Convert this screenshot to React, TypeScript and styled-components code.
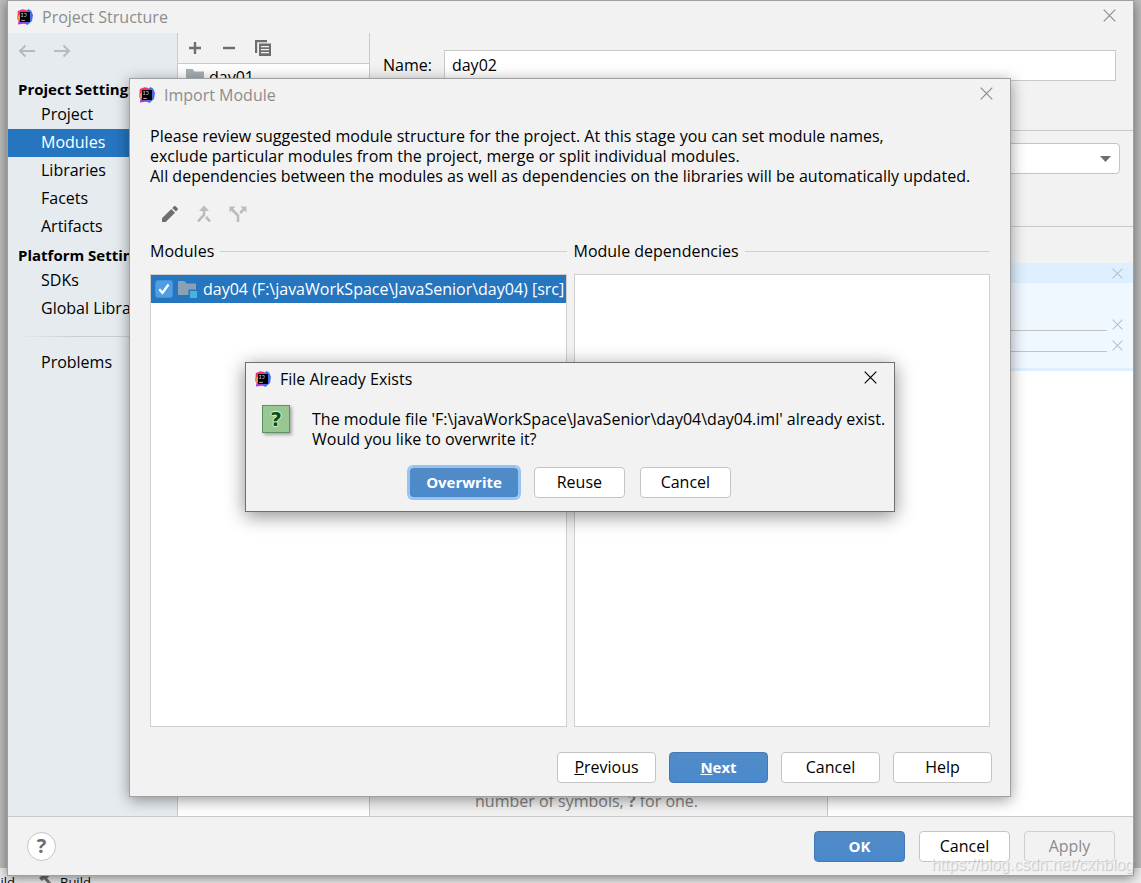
import React from "react";
import styled, { createGlobalStyle, css } from "styled-components";

const GlobalStyle = createGlobalStyle`
  *, *::before, *::after { box-sizing: border-box; }
  body { margin: 0; }
  body, button, input, select {
    font-family: "Open Sans", "Noto Sans", sans-serif;
    font-size: 16px;
    line-height: 20px;
    color: #000;
  }
  h1, h2, p, ul { margin: 0; padding: 0; font-size: inherit; font-weight: 400; }
  ul { list-style: none; }
`;

const boldFont = css`
  font-size: 15px;
  font-weight: 700;
`;

const Desktop = styled.div`
  position: relative;
  min-height: 100vh;
  padding: 0 7px 7px;
  overflow: hidden;
  background: #c0c0c0;
`;

const StatusStrip = styled.div`
  position: absolute;
  left: 0;
  right: 0;
  bottom: 0;
  height: 15px;
  display: flex;
  align-items: flex-start;
  gap: 24px;
  padding-top: 4px;
  background: #f0f0f0;
  font-size: 13px;
`;

const StripItem = styled.span`
  display: flex;
  gap: 7px;
`;

const CutLabel = styled.span`
  display: flex;
  justify-content: flex-end;
  width: 15px;
`;

const windowFrame = css`
  display: flex;
  flex-direction: column;
  background: #f2f2f2;
`;

const MainWindow = styled.main`
  ${windowFrame}
  position: relative;
  min-height: calc(100vh - 7px);
  border: 1px solid #a0a0a0;
  box-shadow: 0 2px 12px rgba(0, 0, 0, 0.5);
`;

const TitleBar = styled.header<{ $muted?: boolean }>`
  display: flex;
  align-items: center;
  gap: 9px;
  height: 32px;
  padding: 0 17px 0 9px;
  color: ${(p) => (p.$muted ? "#8c8c8c" : "#000")};
  h1, h2 { flex: 1; }
`;

const IconButton = styled.button`
  display: flex;
  align-items: center;
  justify-content: center;
  padding: 0;
  border: 0;
  background: none;
  color: inherit;
`;

const CloseButton = styled(IconButton)`
  align-self: flex-start;
  padding-top: 8px;
`;

const Body = styled.div`
  flex: 1;
  display: flex;
`;

const Sidebar = styled.nav`
  flex: 0 0 170px;
  border-right: 1px solid #c9cccf;
  background: #e6ebf0;
  white-space: nowrap;
  overflow: hidden;
`;

const SidebarTools = styled.div`
  display: flex;
  align-items: flex-start;
  gap: 17px;
  height: 42px;
  padding: 8px 10px;
  color: #b8bbbe;
`;

const SidebarHeading = styled.h2`
  && {
    ${boldFont}
    height: 26px;
    padding: 4px 0 0 10px;
  }
`;

const SidebarLink = styled.a<{ $selected?: boolean }>`
  display: block;
  height: 28px;
  padding: 3px 0 0 33px;
  color: ${(p) => (p.$selected ? "#fff" : "#000")};
  background: ${(p) => (p.$selected ? "#2675bf" : "transparent")};
  text-decoration: none;
`;

const SidebarRule = styled.hr`
  height: 1px;
  margin: 13px 0 12px 8px;
  border: 0;
  background: linear-gradient(to right, transparent, #cdcdcd 60px);
`;

const ListColumn = styled.section`
  flex: 0 0 192px;
  display: flex;
  flex-direction: column;
  border-right: 1px solid #c9c9c9;
`;

const ListTools = styled.div`
  display: flex;
  gap: 18px;
  height: 31px;
  padding: 0 9px;
  border-bottom: 1px solid #c9c9c9;
  color: #6e6e6e;
`;

const ListItems = styled.ul`
  flex: 1;
  padding: 4px 8px;
  background: #fff;
  line-height: 18px;
  li { display: flex; gap: 3px; align-items: center; }
`;

const Detail = styled.section`
  flex: 1;
  display: flex;
  flex-direction: column;
`;

const NameRow = styled.div`
  display: flex;
  align-items: center;
  gap: 12px;
  height: 98px;
  padding: 0 17px 33px 13px;
  border-bottom: 1px solid #c9c9c9;
`;

const TextInput = styled.input`
  flex: 1;
  min-width: 0;
  height: 31px;
  padding: 0 7px;
  border: 1px solid #c9c9c9;
  background: #fff;
`;

const FormatRow = styled.div`
  height: 96px;
  padding: 12px 13px 0;
  border-bottom: 1px solid #c9c9c9;
`;

const SelectWrap = styled.div`
  position: relative;
  color: #6e6e6e;
  svg { position: absolute; right: 9px; top: 13px; pointer-events: none; }
`;

const Select = styled.select`
  appearance: none;
  width: 100%;
  height: 31px;
  border: 1px solid #c4c4c4;
  border-radius: 4px;
  background: #fff;
`;

const Roots = styled.div`
  flex: 1;
  display: flex;
`;

const SourcesPane = styled.div`
  flex: 0 0 60%;
  display: flex;
  align-items: flex-end;
  padding: 0 0 5px 105px;
  border-right: 1px solid #c9c9c9;
  color: #808080;
`;

const ContentPane = styled.div`
  flex: 1;
  margin-top: 36px;
  background: #fff;
  color: #b4c0c9;
`;

const RootBlock = styled.div`
  height: 108px;
  border-bottom: 3px solid #def0ff;
  background: #f0f8ff;
`;

const RootRow = styled.div<{ $head?: boolean }>`
  display: flex;
  align-items: center;
  gap: 5px;
  height: ${(p) => (p.$head ? 20 : 21)}px;
  padding: 0 10px 0 16px;
  background: ${(p) => (p.$head ? "#def0ff" : "transparent")};
`;

const RootRows = styled.div`
  padding-top: 31px;
`;

const RootLine = styled.span<{ $visible?: boolean }>`
  flex: 1;
  align-self: flex-end;
  height: 5px;
  border-top: 1px solid ${(p) => (p.$visible ? "#c0c4c8" : "transparent")};
`;

const MainFooter = styled.footer`
  display: flex;
  align-items: center;
  gap: 14px;
  height: 59px;
  padding: 0 18px 0 19px;
  border-top: 1px solid #c9c9c9;
`;

const Spacer = styled.span`
  flex: 1;
`;

const HelpButton = styled.button`
  width: 29px;
  height: 29px;
  padding: 0;
  border: 1px solid #c4c4c4;
  border-radius: 50%;
  background: #fff;
  color: #6e6e6e;
  font-size: 20px;
  font-weight: 700;
`;

const Button = styled.button<{ $primary?: boolean; $wide?: boolean; $focused?: boolean }>`
  min-width: ${(p) => (p.$wide ? 99 : 91)}px;
  height: 31px;
  padding: 0 16px 1px;
  border: 1px solid #c4c4c4;
  border-radius: 4px;
  background: #fff;
  &:disabled { background: #f2f2f2; color: #8c8c8c; border-color: #cfcfcf; }
  ${(p) =>
    p.$primary &&
    css`
      ${boldFont}
      border-color: #4278b8;
      background: linear-gradient(#528cc7, #4989cc);
      color: #fff;
    `}
  ${(p) =>
    p.$focused &&
    css`
      border-color: #97c3f3;
      box-shadow: 0 0 0 2px #97c3f3;
    `}
`;

const ImportDialog = styled.section`
  ${windowFrame}
  position: absolute;
  inset: 77px 122px 78px 121px;
  border: 1px solid #a0a0a0;
  box-shadow: 0 3px 14px rgba(0, 0, 0, 0.4);
`;

const ImportContent = styled.div`
  flex: 1;
  display: flex;
  flex-direction: column;
  padding: 15px 20px 0;
`;

const ImportTools = styled.div`
  display: flex;
  gap: 14px;
  padding: 18px 10px 17px;
  color: #bcbcbc;
`;

const Panels = styled.div`
  flex: 1;
  display: grid;
  grid-template-columns: 1fr 1fr;
  gap: 7px;
`;

const Panel = styled.div`
  display: flex;
  flex-direction: column;
  gap: 13px;
  min-width: 0;
`;

const PanelTitle = styled.h2`
  display: flex;
  align-items: center;
  gap: 6px;
  white-space: nowrap;
  &::after { content: ""; flex: 1; border-top: 1px solid #cfcfcf; }
`;

const PanelList = styled.ul`
  flex: 1;
  border: 1px solid #cfcfcf;
  background: #fff;
`;

const ModuleRow = styled.label`
  display: flex;
  align-items: center;
  gap: 5px;
  height: 28px;
  padding-left: 4px;
  background: #2675bf;
  color: #fff;
  white-space: nowrap;
`;

const Tick = styled.span`
  position: relative;
  display: flex;
  flex: none;
  color: #fff;
  svg { position: absolute; left: 0; top: 0; pointer-events: none; }
`;

const TickInput = styled.input`
  appearance: none;
  width: 18px;
  height: 18px;
  margin: 0;
  border: 1px solid #4591dc;
  border-radius: 3px;
  background: #4f9ee3;
`;

const ImportFooter = styled.footer`
  display: flex;
  justify-content: flex-end;
  gap: 13px;
  padding: 25px 18px 13px;
`;

const PromptLayer = styled.div`
  position: absolute;
  inset: 0;
  display: flex;
  align-items: center;
  justify-content: center;
  padding-bottom: 2px;
`;

const Prompt = styled.section`
  ${windowFrame}
  width: 650px;
  border: 1px solid #707070;
  box-shadow: 0 4px 18px rgba(0, 0, 0, 0.45);
`;

const PromptBody = styled.div`
  display: flex;
  gap: 22px;
  padding: 10px 0 0 16px;
`;

const QuestionBadge = styled.span`
  display: flex;
  flex: none;
  align-items: center;
  justify-content: center;
  width: 28px;
  height: 28px;
  border: 1px solid #5f8f62;
  background: #99c794;
  box-shadow: 2px 2px 3px rgba(0, 0, 0, 0.3);
  color: #0b4d10;
  font-family: "DejaVu Sans", sans-serif;
  font-size: 20px;
  font-weight: 700;
  text-shadow: 1px 0 #d4f5cf, -1px 0 #d4f5cf, 0 1px #d4f5cf, 0 -1px #d4f5cf;
`;

const PromptText = styled.p`
  padding-top: 4px;
  white-space: nowrap;
`;

const PromptButtons = styled.footer`
  display: flex;
  justify-content: center;
  gap: 15px;
  padding: 18px 0 13px;
`;

const Watermark = styled.span`
  position: absolute;
  right: 7px;
  bottom: 8px;
  font-family: "Liberation Sans", Arial, sans-serif;
  font-size: 16px;
  color: rgba(255, 255, 255, 0.6);
  text-shadow: 1px 1px 1px rgba(120, 120, 120, 0.4);
  pointer-events: none;
`;

const IdeaLogo = () => (
  <svg width="16" height="16" viewBox="0 0 16 16" aria-hidden="true">
    <path d="M.8 2 5.500.300 9.500 1 9 8 3.500 13 .3 10z" fill="#fe2d6b" />
    <path d="M0 7.500 3 5.500 5 12 1 11.500z" fill="#fb8a3c" />
    <path d="M8.500 2.500 11.500 0 14.200 1.800 16 6 15 12 10.500 16 6.500 14z" fill="#4a6bea" />
    <path d="M.8 15.500 1.800 11 9 11.500 8.500 14.500z" fill="#a63cd6" />
    <rect x="3" y="3" width="10" height="10" fill="#000" />
    <path d="M4.300 4.500h1.900M5.250 4.500v3M4.300 7.500h1.900M7.300 4.500h1.900v2.200q0 .8-.8.800H7.200" stroke="#c8c8c8" fill="none" strokeWidth=".7" />
    <path d="M4.300 11.400h3.600" stroke="#e0e0e0" strokeWidth=".8" />
  </svg>
);

const CloseIcon = ({ size = 13 }: { size?: number }) => (
  <svg width={size} height={size} viewBox="0 0 13 13" aria-hidden="true">
    <path d="M.7.700l11.600 11.600M12.300.700L.7 12.300" stroke="currentColor" strokeWidth="1.200" fill="none" />
  </svg>
);

const ArrowIcon = ({ right }: { right?: boolean }) => (
  <svg width="18" height="20" viewBox="0 0 18 20" aria-hidden="true">
    <path
      d={right ? "M1 10h15M10.500 4.500 16 10l-5.500 5.500" : "M17 10H2M7.500 4.500 2 10l5.500 5.500"}
      stroke="currentColor"
      strokeWidth="2"
      fill="none"
    />
  </svg>
);

const AddIcon = () => (
  <svg width="16" height="16" viewBox="0 0 16 16" aria-hidden="true">
    <path d="M8 2v12M2 8h12" stroke="currentColor" strokeWidth="2.400" />
  </svg>
);

const RemoveIcon = () => (
  <svg width="16" height="16" viewBox="0 0 16 16" aria-hidden="true">
    <path d="M2 8h12" stroke="currentColor" strokeWidth="2.400" />
  </svg>
);

const CopyIcon = () => (
  <svg width="16" height="16" viewBox="0 0 16 16" aria-hidden="true">
    <path d="M0 0h12v2.200H2.200V13H0z" fill="currentColor" />
    <path fillRule="evenodd" d="M4 3.500h12V16H4zM6 6v1.200h8V6zM6 9v1.200h8V9zM6 12v1.200h8V12z" fill="currentColor" />
  </svg>
);

const FolderIcon = ({ module }: { module?: boolean }) => (
  <svg width="20" height="18" viewBox="0 0 20 18" aria-hidden="true">
    <path d="M0 1h6.500l2 2.500H18V15H0z" fill={module ? "#8aa0b4" : "#a4afb6"} />
    {module && <path d="M10.500 9.500H20V18h-9.500z" fill="#2675bf" />}
    {module && <path d="M12 11h7v7h-7z" fill="#40b6e0" />}
  </svg>
);

const EditIcon = () => (
  <svg width="20" height="20" viewBox="0 0 20 20" aria-hidden="true">
    <path d="M2 14.300 11.300 5 15 8.700 5.700 18H2zM12.300 4 14 2.200q.8-.8 1.600 0l2 2q.8.800 0 1.600L16 7.600z" fill="#6e6e6e" />
  </svg>
);

const MergeIcon = () => (
  <svg width="20" height="20" viewBox="0 0 20 20" aria-hidden="true">
    <path d="M10 4v7L4 17.300M12 13l4 4.300" stroke="currentColor" strokeWidth="2.600" fill="none" />
    <path d="M10 1.500 15 7H5z" fill="currentColor" />
  </svg>
);

const SplitIcon = () => (
  <svg width="20" height="20" viewBox="0 0 20 20" aria-hidden="true">
    <path d="M10 18v-6.500L4 5.500M12.200 9 16 5" stroke="currentColor" strokeWidth="2.600" fill="none" />
    <path d="M1.500 2.500h6l-6 6zM18.500 2.500h-6l6 6z" fill="currentColor" />
  </svg>
);

const HammerIcon = () => (
  <svg width="14" height="14" viewBox="0 0 14 14" aria-hidden="true">
    <path d="M0 6 6 1l6-1-3 3 1 2-2 1 5 6-2 2-6-7-2 2z" fill="#6e6e6e" />
  </svg>
);

const CheckIcon = () => (
  <svg width="18" height="18" viewBox="0 0 18 18" aria-hidden="true">
    <path d="M4.300 9.300 7.500 13 13.500 4.500" stroke="currentColor" strokeWidth="2.300" fill="none" />
  </svg>
);

const projectLinks = ["Project", "Modules", "Libraries", "Facets", "Artifacts"];
const platformLinks = ["SDKs", "Global Libraries"];

export default function App() {
  return (
    <>
      <GlobalStyle />
      <Desktop>
        <StatusStrip>
          <CutLabel>Build</CutLabel>
          <StripItem>
            <HammerIcon />
            Build
          </StripItem>
        </StatusStrip>

        <MainWindow>
          <TitleBar $muted>
            <IdeaLogo />
            <h1>Project Structure</h1>
            <CloseButton aria-label="Close Project Structure"><CloseIcon /></CloseButton>
          </TitleBar>

          <Body>
            <Sidebar>
              <SidebarTools>
                <IconButton aria-label="Back"><ArrowIcon /></IconButton>
                <IconButton aria-label="Forward"><ArrowIcon right /></IconButton>
              </SidebarTools>
              <SidebarHeading>Project Settings</SidebarHeading>
              {projectLinks.map((name) => (
                <SidebarLink key={name} href="#" $selected={name === "Modules"}>{name}</SidebarLink>
              ))}
              <SidebarHeading>Platform Settings</SidebarHeading>
              {platformLinks.map((name) => (
                <SidebarLink key={name} href="#">{name}</SidebarLink>
              ))}
              <SidebarRule />
              <SidebarLink href="#">Problems</SidebarLink>
            </Sidebar>

            <ListColumn>
              <ListTools>
                <IconButton aria-label="Add"><AddIcon /></IconButton>
                <IconButton aria-label="Remove"><RemoveIcon /></IconButton>
                <IconButton aria-label="Copy"><CopyIcon /></IconButton>
              </ListTools>
              <ListItems>
                <li><FolderIcon />day01</li>
              </ListItems>
            </ListColumn>

            <Detail>
              <NameRow>
                <label htmlFor="module-name">Name:</label>
                <TextInput id="module-name" defaultValue="day02" />
              </NameRow>
              <FormatRow>
                <SelectWrap>
                  <Select aria-label="Language level" />
                  <svg width="11" height="6" viewBox="0 0 11 6" aria-hidden="true">
                    <path d="M0 0h11L5.500 6z" fill="currentColor" />
                  </svg>
                </SelectWrap>
              </FormatRow>
              <Roots>
                <SourcesPane>
                  <p>number of symbols, <b>?</b> for one.</p>
                </SourcesPane>
                <ContentPane>
                  <RootBlock>
                    <RootRow $head>
                      <RootLine />
                      <IconButton aria-label="Remove content root"><CloseIcon size={11} /></IconButton>
                    </RootRow>
                    <RootRows>
                      <RootRow>
                        <RootLine $visible />
                        <IconButton aria-label="Remove source folder"><CloseIcon size={11} /></IconButton>
                      </RootRow>
                      <RootRow>
                        <RootLine $visible />
                        <IconButton aria-label="Remove excluded folder"><CloseIcon size={11} /></IconButton>
                      </RootRow>
                    </RootRows>
                  </RootBlock>
                </ContentPane>
              </Roots>
            </Detail>
          </Body>

          <MainFooter>
            <HelpButton aria-label="Help">?</HelpButton>
            <Spacer />
            <Button $primary>OK</Button>
            <Button>Cancel</Button>
            <Button disabled>Apply</Button>
          </MainFooter>

          <ImportDialog role="dialog" aria-label="Import Module">
            <TitleBar $muted>
              <IdeaLogo />
              <h2>Import Module</h2>
              <CloseButton aria-label="Close Import Module"><CloseIcon /></CloseButton>
            </TitleBar>
            <ImportContent>
              <p>
                Please review suggested module structure for the project. At this stage you can set module names,
                <br />
                exclude particular modules from the project, merge or split individual modules.
                <br />
                All dependencies between the modules as well as dependencies on the libraries will be automatically updated.
              </p>
              <ImportTools>
                <IconButton aria-label="Rename"><EditIcon /></IconButton>
                <IconButton aria-label="Merge"><MergeIcon /></IconButton>
                <IconButton aria-label="Split"><SplitIcon /></IconButton>
              </ImportTools>
              <Panels>
                <Panel>
                  <PanelTitle>Modules</PanelTitle>
                  <PanelList>
                    <li>
                      <ModuleRow>
                        <Tick>
                          <TickInput type="checkbox" defaultChecked />
                          <CheckIcon />
                        </Tick>
                        <FolderIcon module />
                        {"day04 (F:\\javaWorkSpace\\JavaSenior\\day04) [src]"}
                      </ModuleRow>
                    </li>
                  </PanelList>
                </Panel>
                <Panel>
                  <PanelTitle>Module dependencies</PanelTitle>
                  <PanelList />
                </Panel>
              </Panels>
            </ImportContent>
            <ImportFooter>
              <Button $wide><u>P</u>revious</Button>
              <Button $wide $primary><u>N</u>ext</Button>
              <Button $wide>Cancel</Button>
              <Button $wide>Help</Button>
            </ImportFooter>

            <PromptLayer>
              <Prompt role="alertdialog" aria-label="File Already Exists">
                <TitleBar>
                  <IdeaLogo />
                  <h2>File Already Exists</h2>
                  <CloseButton aria-label="Close File Already Exists"><CloseIcon /></CloseButton>
                </TitleBar>
                <PromptBody>
                  <QuestionBadge>?</QuestionBadge>
                  <PromptText>
                    {"The module file 'F:\\javaWorkSpace\\JavaSenior\\day04\\day04.iml' already exist."}
                    <br />
                    Would you like to overwrite it?
                  </PromptText>
                </PromptBody>
                <PromptButtons>
                  <Button $primary $focused>Overwrite</Button>
                  <Button>Reuse</Button>
                  <Button>Cancel</Button>
                </PromptButtons>
              </Prompt>
            </PromptLayer>
          </ImportDialog>
        </MainWindow>
        <Watermark>https://blog.csdn.net/cxhblog</Watermark>
      </Desktop>
    </>
  );
}
